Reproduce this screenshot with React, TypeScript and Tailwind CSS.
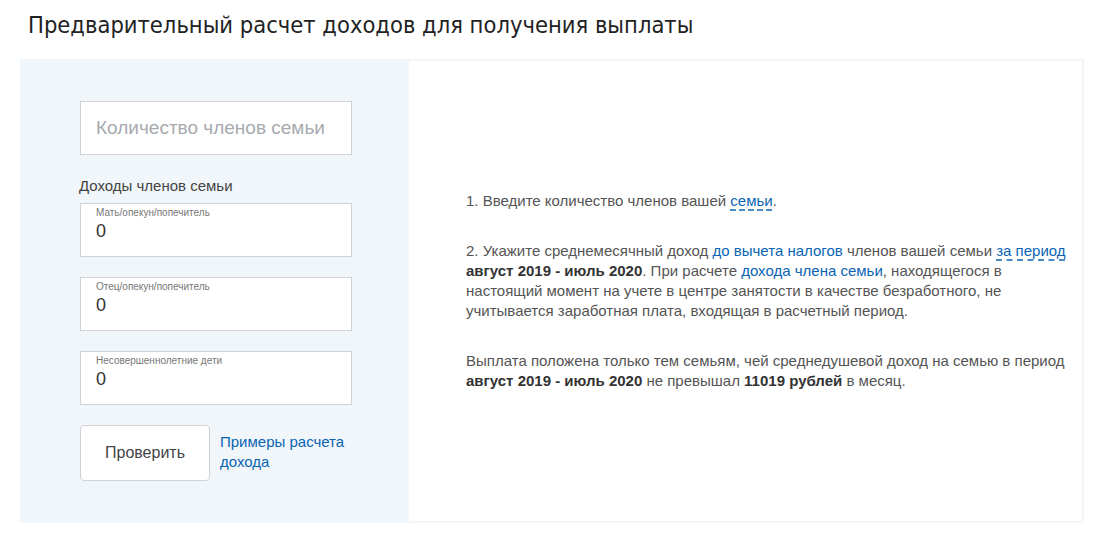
import React from 'react';

const incomeFields = [
  { label: 'Мать/опекун/попечитель', value: '0' },
  { label: 'Отец/опекун/попечитель', value: '0' },
  { label: 'Несовершеннолетние дети', value: '0' },
];

const IncomeField: React.FC<{ label: string; value: string }> = ({ label, value }) => (
  <div className="w-[272px] h-[54px] bg-white border border-[#cfd3d7] pl-[15px] pt-[2px]">
    <div className="text-[10px] leading-[14px] text-[#777]">{label}</div>
    <div className="text-[18px] leading-[22px] text-[#333]">{value}</div>
  </div>
);

export default function App() {
  return (
    <div className="w-[1103px] h-[539px] bg-white font-['Liberation_Sans',Arial,sans-serif] text-[#333]">
      {/* Title */}
      <h1 className="h-[50px] flex items-center pl-[28px] pt-[1px] text-[23.5px] text-[#222] font-['Liberation_Sans_Narrow','DejaVu_Sans_Condensed',sans-serif]">
        Предварительный расчет доходов для получения выплаты
      </h1>

      <div className="ml-[20px] mt-[9px] w-[1064px] h-[464px] flex bg-[#f1f6fa] pt-[2px] pr-[2px] pb-[2px]">
        {/* Left: form */}
        <div className="w-[389px] shrink-0 pl-[60px] pt-[40px]">
          <div className="w-[272px] h-[54px] bg-white border border-[#cfd3d7] flex items-center pl-[15px] text-[19px] text-[#a7aaae]">
            Количество членов семьи
          </div>

          <div className="mt-[22px] -ml-[1px] text-[15px] leading-[18px] text-[#444]">Доходы членов семьи</div>

          <div className="mt-[8px] flex flex-col gap-[20px]">
            {incomeFields.map((f) => (
              <IncomeField key={f.label} label={f.label} value={f.value} />
            ))}
          </div>

          <div className="mt-[20px] flex items-start gap-[10px]">
            <button className="w-[130px] h-[56px] bg-white border border-[#cfd3d7] rounded-[4px] text-[16px] text-[#444]">
              Проверить
            </button>
            <a className="pt-[7px] text-[15px] leading-[20px] text-[#0a64b4] w-[140px]">
              Примеры расчета дохода
            </a>
          </div>
        </div>

        {/* Right: instructions */}
        <div className="flex-1 bg-white flex flex-col justify-center pl-[57px] pr-[10px] text-[15px] leading-[20px] text-[#555]">
          <p>
            1. Введите количество членов вашей{' '}
            <span className="text-[#0a64b4] underline decoration-dashed decoration-[#0a64b4] underline-offset-[4px]">семьи</span>.
          </p>

          <p className="mt-[30px]">
            2. Укажите среднемесячный доход{' '}
            <span className="text-[#0a64b4]">до вычета налогов</span> членов вашей семьи{' '}
            <span className="text-[#0a64b4] underline decoration-dashed decoration-[#0a64b4] underline-offset-[4px]">за период</span>{' '}
            <b className="text-[#333]">август 2019 - июль 2020</b>. При расчете{' '}
            <span className="text-[#0a64b4]">дохода члена семьи</span>, находящегося в настоящий момент на
            учете в центре занятости в качестве безработного, не учитывается заработная плата, входящая в
            расчетный период.
          </p>

          <p className="mt-[30px]">
            Выплата положена только тем семьям, чей среднедушевой доход на семью в период{' '}
            <b className="text-[#333]">август 2019 - июль 2020</b> не превышал{' '}
            <b className="text-[#333]">11019 рублей</b> в месяц.
          </p>
        </div>
      </div>
    </div>
  );
}
